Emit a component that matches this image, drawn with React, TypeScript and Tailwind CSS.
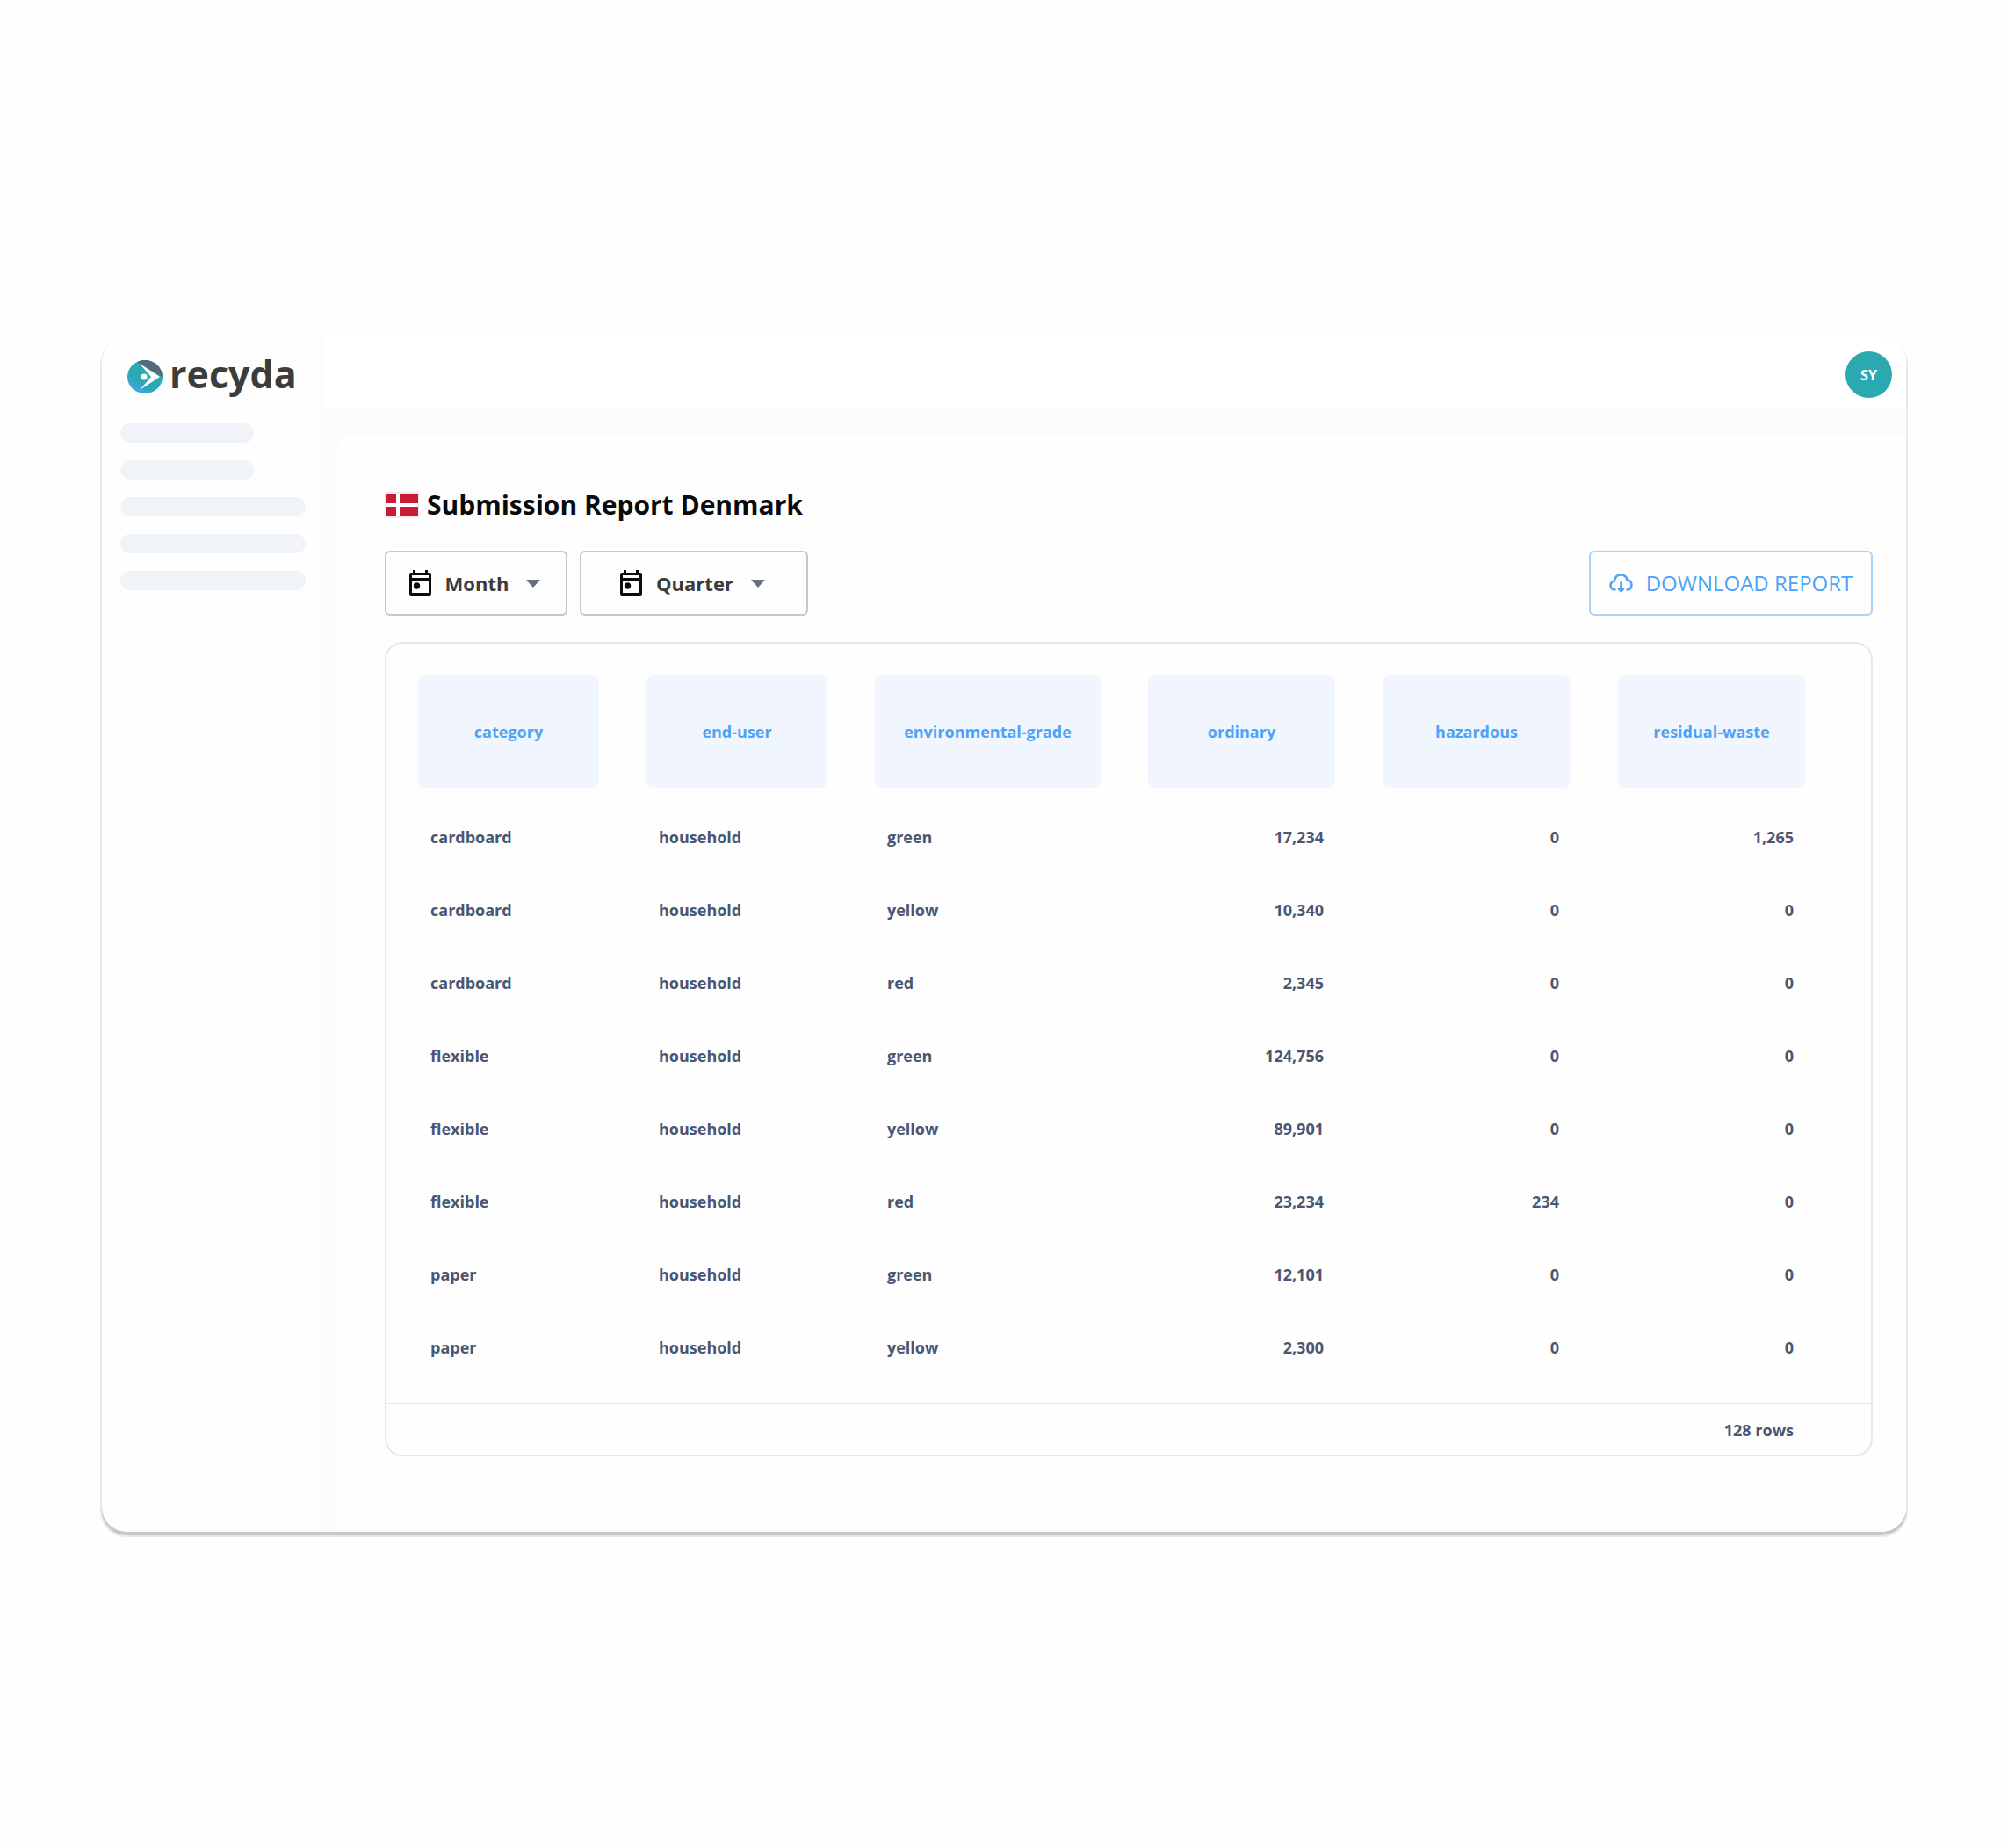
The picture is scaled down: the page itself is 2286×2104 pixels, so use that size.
import { useId } from "react";

const columns = [
  { name: "category", width: "w-[260px]", numeric: false },
  { name: "end-user", width: "w-[260px]", numeric: false },
  { name: "environmental-grade", width: "w-[311px]", numeric: false },
  { name: "ordinary", width: "w-[267px]", numeric: true },
  { name: "hazardous", width: "w-[268px]", numeric: true },
  { name: "residual-waste", width: "w-[267px]", numeric: true },
];

const rows = [
  ["cardboard", "household", "green", "17,234", "0", "1,265"],
  ["cardboard", "household", "yellow", "10,340", "0", "0"],
  ["cardboard", "household", "red", "2,345", "0", "0"],
  ["flexible", "household", "green", "124,756", "0", "0"],
  ["flexible", "household", "yellow", "89,901", "0", "0"],
  ["flexible", "household", "red", "23,234", "234", "0"],
  ["paper", "household", "green", "12,101", "0", "0"],
  ["paper", "household", "yellow", "2,300", "0", "0"],
];

function Logo() {
  const id = useId();
  return (
    <a href="#" className="flex items-center gap-2 pl-[29px] h-[50px]">
      <svg viewBox="0 0 40 38" className="w-10 h-[38px] shrink-0">
        <defs>
          <linearGradient id={id} x1="0.1" y1="0.95" x2="0.5" y2="0.4">
            <stop offset="0" stopColor="#4aa3f8" />
            <stop offset="0.6" stopColor="#2aa9b2" />
          </linearGradient>
          <clipPath id={id + "c"}>
            <ellipse cx="20" cy="19" rx="20" ry="19" />
          </clipPath>
        </defs>
        <g clipPath={`url(#${id + "c"})`}>
          <rect width="40" height="38" fill={`url(#${id})`} />
          <path d="M8 0H40V19L14 4Z" fill="#586878" />
        </g>
        <path d="M14 4L37 19L14 34L27 19Z" fill="#fff" />
        <circle cx="19" cy="19" r="3.500" fill="#fff" />
      </svg>
      <span className="font-bold text-[43px] leading-[42px] pb-[6px] text-[#3c3c3b]">
        recyda
      </span>
    </a>
  );
}

function Sidebar() {
  return (
    <aside className="w-[250px] shrink-0 pt-5">
      <Logo />
      <div className="flex flex-col gap-5 pl-[21px] pt-7">
        <div className="w-[152px] h-[22px] rounded-full bg-[#f0f4f9]" />
        <div className="w-[152px] h-[22px] rounded-full bg-[#f0f4f9]" />
        <div className="w-[211px] h-[22px] rounded-full bg-[#f0f4f9]" />
        <div className="w-[211px] h-[22px] rounded-full bg-[#f0f4f9]" />
        <div className="w-[211px] h-[22px] rounded-full bg-[#f0f4f9]" />
      </div>
    </aside>
  );
}

function DenmarkFlag() {
  return (
    <svg viewBox="0 0 39 30" className="w-[39px] h-[30px] shrink-0">
      <rect width="39" height="30" rx="1" fill="#edeef2" />
      <rect x="1" y="2" width="37" height="26" fill="#fff" />
      <path d="M2 2h11v11H2zM17 2h21v11H17zM2 17h11v11H2zM17 17h21v11H17z" fill="#cb1a36" />
    </svg>
  );
}

function CalendarIcon() {
  return (
    <svg viewBox="0 0 27 30" className="w-[27px] h-[30px] shrink-0">
      <path
        d="M3 3h2V0h3v3h11V0h3v3h2a2 2 0 0 1 2 2v22a2 2 0 0 1-2 2H3a2 2 0 0 1-2-2V5a2 2 0 0 1 2-2zM4 12v14h19V12zM4 6v3h19V6z"
        fill="#0c0c0e"
        fillRule="evenodd"
      />
      <circle cx="9.500" cy="18" r="3.700" fill="#0c0c0e" />
    </svg>
  );
}

function PeriodButton(props: { label: string; className: string }) {
  return (
    <button
      type="button"
      className={`${props.className} h-[74px] pr-1 flex items-center justify-center border-2 border-[#c6c6cc] rounded-md font-bold text-[22px] leading-8 text-[#3c3c3b]`}
    >
      <CalendarIcon />
      <span className="ml-[15px] mr-5">{props.label}</span>
      <svg viewBox="0 0 16 9" className="w-4 h-[9px]">
        <path d="M0 0h16L8 9z" fill="#667085" />
      </svg>
    </button>
  );
}

function ReportTable() {
  return (
    <div className="border-2 border-[#e5e7ea] rounded-[20px] text-lg font-bold text-[#4a5672]">
      <div className="pl-9 pr-[21px] pt-9 pb-[22px]">
        <table className="w-full table-fixed">
          <thead>
            <tr>
              {columns.map((c) => (
                <th key={c.name} className={`${c.width} p-0 pr-[54px] pb-[14px]`}>
                  <div className="h-32 flex items-center justify-center rounded-lg bg-[#f1f6fe] text-[#4da3f8]">
                    {c.name}
                  </div>
                </th>
              ))}
            </tr>
          </thead>
          <tbody>
            {rows.map((row, i) => (
              <tr key={i} className="h-[83px]">
                {row.map((cell, j) => (
                  <td
                    key={j}
                    className={columns[j].numeric ? "text-right pr-[67px]" : "pl-[14px]"}
                  >
                    {cell}
                  </td>
                ))}
              </tr>
            ))}
          </tbody>
        </table>
      </div>
      <div className="border-t-2 border-[#e5e7ea] h-[59px] pr-[88px] flex items-center justify-end">
        128 rows
      </div>
    </div>
  );
}

function App() {
  return (
    <div className="min-h-screen bg-[#fefefe] px-[116px] pt-96 pb-[360px] font-['Open_Sans',sans-serif]">
      <div className="flex rounded-[28px] bg-[#fefefe] shadow-[0_4px_0_0_#c8c8c8,0_4px_0_2px_#e8e8e8,0_1px_0_1px_#e8e8e8] overflow-hidden">
        <Sidebar />
        <div className="flex-1 min-w-0 bg-[#fafcfb]">
          <header className="h-20 ml-[2px] bg-white flex items-center justify-end pr-4 pt-[5px]">
            <button
              type="button"
              className="w-[53px] h-[53px] rounded-full bg-[#2aa9b0] text-white font-bold text-base"
            >
              SY
            </button>
          </header>
          <main className="mt-[30px] ml-[18px] rounded-tl-[20px] bg-[#fefefe] pl-[54px] pr-[38px] pt-[60px] pb-[86px]">
            <h1 className="flex items-center gap-[9px] text-[30px] leading-[42px] font-bold text-[#0a0a0a]">
              <DenmarkFlag />
              Submission Report Denmark
            </h1>
            <div className="flex mt-[31px] mb-[30px]">
              <PeriodButton label="Month" className="w-[208px]" />
              <PeriodButton label="Quarter" className="w-[260px] ml-[14px]" />
              <button
                type="button"
                className="ml-auto w-[323px] h-[74px] flex items-center justify-center gap-[15px] border-2 border-[#a9d3fb] rounded-md text-2xl text-[#4da3f8]"
              >
                <svg
                  viewBox="0 0 27 22"
                  className="w-[27px] h-[22px]"
                  fill="none"
                  stroke="currentColor"
                  strokeWidth="2.600"
                  strokeLinecap="round"
                  strokeLinejoin="round"
                >
                  <path d="M6.500 18.500C3.500 18.500 1.500 16.500 1.500 13.500C1.500 10.800 3.500 8.800 6 8.500C6.500 4 9.500 1.500 13.500 1.500C17.500 1.500 19.800 4 20.500 7.500C23.500 7.800 25.500 10 25.500 13C25.500 16 23.500 18.300 20.500 18.500" />
                  <path d="M13.500 10.500V19M11 17.500L13.500 20L16 17.500" />
                </svg>
                DOWNLOAD REPORT
              </button>
            </div>
            <ReportTable />
          </main>
        </div>
      </div>
    </div>
  );
}

export default App;
